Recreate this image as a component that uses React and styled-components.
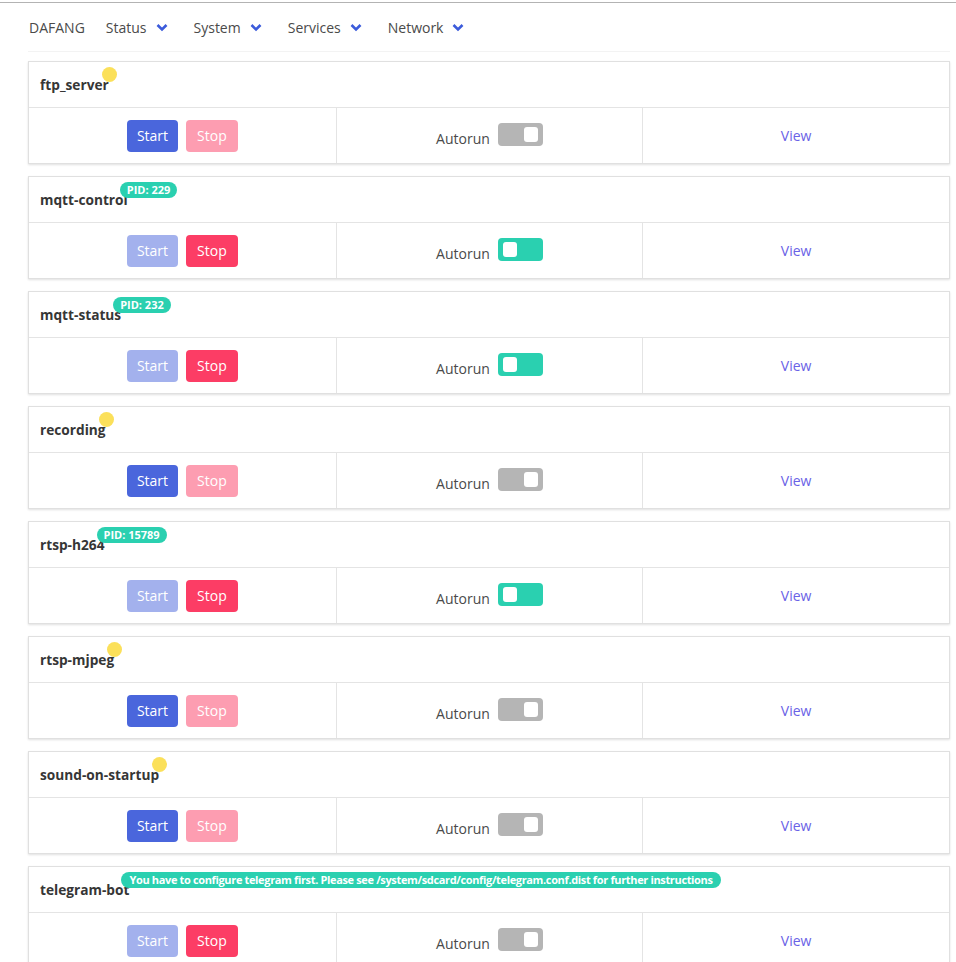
import React from "react";
import styled, { createGlobalStyle } from "styled-components";

const Global = createGlobalStyle`
  html, body { margin: 0; padding: 0; background: #fff; }
  body { font-family: "Open Sans", "Noto Sans", sans-serif; color: #4a4a4a; }
  * { box-sizing: border-box; }
`;

const Page = styled.div`
  margin-top: 2px;
  border-top: 1px solid #b3b3b3;
  padding: 0 6px 0 28px;
`;

const Navbar = styled.nav`
  display: flex;
  align-items: center;
  height: 49px;
  padding-top: 1px;
  border-bottom: 1px solid #f3f3f3;
  margin-bottom: 9px;
`;

const Brand = styled.span`
  font-size: 14px;
  padding: 0 21px 0 1px;
  color: #4a4a4a;
`;

const NavItem = styled.span`
  display: flex;
  align-items: center;
  gap: 9px;
  font-size: 14px;
  color: #4a4a4a;
  padding-right: 26px;
`;

const Chevron = () => (
  <svg width="12" height="9" viewBox="0 0 12 9">
    <path d="M1.5 2 L6 6.5 L10.5 2" fill="none" stroke="#3b5bdb" strokeWidth="2.6" strokeLinejoin="miter" />
  </svg>
);

const Card = styled.section`
  border: 1px solid #e0e0e0;
  box-shadow: 0 1px 2px rgba(10, 10, 10, 0.12);
  margin-bottom: 12px;
  background: #fff;
`;

const Header = styled.header`
  height: 46px;
  display: flex;
  align-items: flex-end;
  padding: 0 11px 13px;
  border-bottom: 1px solid #e4e4e4;
`;

const Title = styled.span`
  position: relative;
  font-size: 13.7px;
  font-weight: 700;
  color: #363636;
  line-height: 18px;
`;

const Dot = styled.span`
  position: absolute;
  left: calc(100% - 7px);
  top: -9px;
  width: 15px;
  height: 15px;
  border-radius: 50%;
  background: #fbe05a;
`;

const Badge = styled.span`
  position: absolute;
  left: calc(100% - 8px);
  top: -9px;
  height: 16px;
  padding: 0 ${(p) => (p.$narrow ? "8px" : "7px")};
  border-radius: 8px;
  background: #2ad0b0;
  color: #fff;
  font-size: 11px;
  font-family: "Open Sans", "Noto Sans", sans-serif;
  letter-spacing: ${(p) => (p.$narrow ? "-0.35px" : "0")};
  font-weight: 700;
  line-height: 16px;
  white-space: nowrap;
`;

const Footer = styled.footer`
  display: grid;
  grid-template-columns: repeat(3, 1fr);
  height: 55px;
`;

const Cell = styled.div`
  display: flex;
  align-items: center;
  justify-content: center;
  gap: 8px;
  & + & { border-left: 1px solid #e4e4e4; }
`;

const Button = styled.button`
  height: 32px;
  padding: 0 ${(p) => (p.$kind === "start" ? "10px" : "11px")};
  border: none;
  border-radius: 4px;
  font-family: "Open Sans", "Noto Sans", sans-serif;
  font-size: 14px;
  color: #fff;
  background: ${(p) => (p.$kind === "start" ? "#4a66dc" : "#fc3d65")};
  opacity: ${(p) => (p.disabled ? 0.5 : 1)};
  cursor: ${(p) => (p.disabled ? "default" : "pointer")};
`;

const Label = styled.span`
  font-size: 14px;
  color: #4a4a4a;
  margin-top: 5px;
`;

const Toggle = styled.span`
  display: flex;
  align-items: center;
  justify-content: ${(p) => (p.$on ? "flex-start" : "flex-end")};
  width: 45px;
  height: 23px;
  padding: 0 5px;
  border-radius: 4px;
  background: ${(p) => (p.$on ? "#2ad0b0" : "#b5b5b5")};
  margin-top: -3px;
`;

const Knob = styled.span`
  width: 14px;
  height: 15px;
  border-radius: 3px;
  background: #fff;
`;

const ViewLink = styled.a`
  font-size: 14px;
  color: #6a62e6;
  text-decoration: none;
  cursor: pointer;
`;

const services = [
  { name: "ftp_server", running: false, autorun: false },
  { name: "mqtt-control", running: true, autorun: true, pid: 229 },
  { name: "mqtt-status", running: true, autorun: true, pid: 232 },
  { name: "recording", running: false, autorun: false },
  { name: "rtsp-h264", running: true, autorun: true, pid: 15789 },
  { name: "rtsp-mjpeg", running: false, autorun: false },
  { name: "sound-on-startup", running: false, autorun: false },
  {
    name: "telegram-bot",
    running: true,
    autorun: false,
    note: "You have to configure telegram first. Please see /system/sdcard/config/telegram.conf.dist for further instructions",
  },
];

function ServiceCard({ s }) {
  let marker = <Dot />;
  if (s.note) marker = <Badge $narrow>{s.note}</Badge>;
  else if (s.pid) marker = <Badge>PID: {s.pid}</Badge>;
  return (
    <Card>
      <Header>
        <Title>
          {s.name}
          {marker}
        </Title>
      </Header>
      <Footer>
        <Cell>
          <Button $kind="start" disabled={s.running}>Start</Button>
          <Button $kind="stop" disabled={!s.running}>Stop</Button>
        </Cell>
        <Cell>
          <Label>Autorun</Label>
          <Toggle $on={s.autorun}>
            <Knob />
          </Toggle>
        </Cell>
        <Cell>
          <ViewLink>View</ViewLink>
        </Cell>
      </Footer>
    </Card>
  );
}

export default function App() {
  return (
    <>
      <Global />
      <Page>
        <Navbar>
          <Brand>DAFANG</Brand>
          {["Status", "System", "Services", "Network"].map((n) => (
            <NavItem key={n}>
              {n}
              <Chevron />
            </NavItem>
          ))}
        </Navbar>
        {services.map((s) => (
          <ServiceCard key={s.name} s={s} />
        ))}
      </Page>
    </>
  );
}
